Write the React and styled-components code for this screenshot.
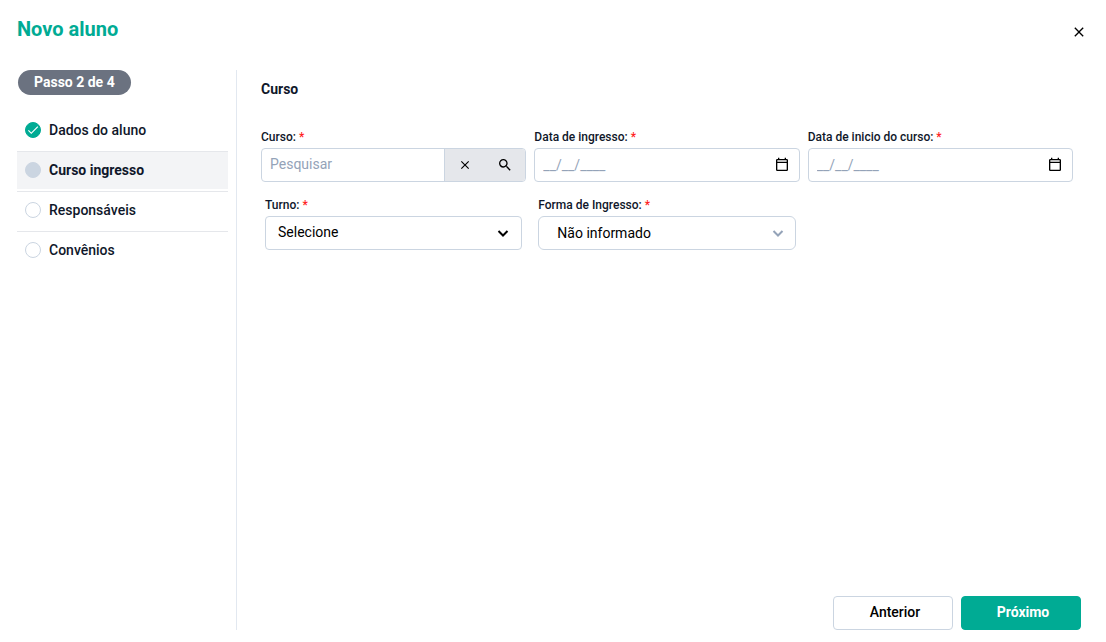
import React, { useState } from 'react';
import styled, { createGlobalStyle } from 'styled-components';

const GlobalStyle = createGlobalStyle`
  *, *::before, *::after {
    box-sizing: border-box;
  }

  body {
    margin: 0;
    background: #fff;
    color: #0f172a;
    font-family: Roboto, 'Liberation Sans', sans-serif;
    font-size: 14px;
    line-height: 20px;
  }

  button, input, select {
    font: inherit;
    color: inherit;
  }
`;

const Dialog = styled.main`
  display: flex;
  flex-direction: column;
  min-height: 100vh;
  padding: 16px 24px 12px 16px;
`;

const Header = styled.header`
  display: flex;
  align-items: flex-start;
  justify-content: space-between;
  height: 54px;
`;

const Title = styled.h1`
  margin: 0 0 0 1px;
  color: #00ab94;
  font-size: 20px;
  font-weight: 700;
  line-height: 26px;
`;

const IconButton = styled.button`
  display: flex;
  align-items: center;
  justify-content: center;
  flex: none;
  width: ${(props) => props.$width || 40}px;
  height: 32px;
  padding: 0;
  border: 0;
  background: transparent;
  color: #000;
  cursor: pointer;
`;

const CloseButton = styled(IconButton)`
  width: 22px;
  margin-right: -8px;
`;

const Content = styled.div`
  display: flex;
  flex: 1;
`;

const Sidebar = styled.aside`
  flex: none;
  width: 221px;
  padding: 0 8px 0 1px;
  border-right: 1px solid #e2e8f0;
`;

const Badge = styled.div`
  width: max-content;
  margin: 0 0 16px 1px;
  padding: 0 16px;
  border-radius: 16px;
  background: #6b7280;
  color: #fff;
  font-weight: 700;
  line-height: 25px;
`;

const Steps = styled.ol`
  margin: 0;
  padding: 0;
  list-style: none;
`;

const Step = styled.li`
  height: 40px;
  padding-bottom: 2px;
  border-top: 1px solid #e5e7eb;

  &:first-child {
    border-top-color: transparent;
  }
`;

const StepLabel = styled.div`
  display: flex;
  align-items: center;
  gap: 8px;
  height: 100%;
  padding: 0 8px 1px;
  background: ${(props) => (props.$active ? '#f3f4f6' : 'transparent')};
  font-weight: ${(props) => (props.$active ? 700 : 500)};
`;

const Dot = styled.span`
  display: flex;
  align-items: center;
  justify-content: center;
  width: 16px;
  height: 16px;
  border: 1px solid ${(props) => (props.$status === 'done' ? '#00ab94' : '#cbd5e1')};
  border-radius: 50%;
  background: ${(props) =>
    ({ done: '#00ab94', active: '#cbd5e1', pending: '#fff' })[props.$status]};
  color: #fff;
`;

const Panel = styled.form`
  display: flex;
  flex: 1;
  flex-direction: column;
  justify-content: space-between;
  min-width: 0;
`;

const Section = styled.section`
  padding: 9px 9px 0 24px;
`;

const SectionTitle = styled.h2`
  margin: 0 0 29px;
  font-size: 14px;
  font-weight: 700;
  line-height: 20px;
`;

const Grid = styled.div`
  display: grid;
  grid-template-columns: repeat(3, minmax(0, 1fr));
  gap: 14px 8px;
`;

const Field = styled.div`
  padding: 0 ${(props) => (props.$inset ? 4 : 0)}px;
`;

const Label = styled.label`
  display: block;
  margin-bottom: 2px;
  font-size: 12px;
  font-weight: 500;
  line-height: 18px;
`;

const Required = styled.span`
  color: #f22;
`;

const Control = styled.div`
  display: flex;
  align-items: center;
  height: 34px;
  border: 1px solid #cbd5e1;
  border-radius: 4px;
  background: #fff;
  overflow: hidden;
`;

const Input = styled.input`
  flex: 1;
  min-width: 0;
  height: 32px;
  padding: 0 8px ${(props) => (props.$raised ? 2 : 0)}px;
  border: 0;
  outline: none;
  background: transparent;

  &::placeholder {
    color: #94a3b8;
    opacity: 1;
  }
`;

const Actions = styled.div`
  display: flex;
  align-self: stretch;
  border-left: 1px solid #cbd5e1;
  background: #e5e7eb;
`;

const SelectBox = styled.div`
  display: grid;
  align-items: center;

  & > * {
    grid-area: 1 / 1;
  }

  & > svg {
    justify-self: end;
    margin-right: ${(props) => (props.$soft ? 10 : 11)}px;
    color: ${(props) => (props.$soft ? '#94a3b8' : '#000')};
    pointer-events: none;
  }
`;

const Select = styled.select`
  appearance: none;
  width: 100%;
  height: 34px;
  padding: ${(props) => (props.$soft ? '0 32px 0 18px' : '0 32px 2px 12px')};
  border: 1px solid #cbd5e1;
  border-radius: ${(props) => (props.$soft ? 6 : 4)}px;
  background: #fff;
  color: #000;
`;

const Footer = styled.footer`
  display: flex;
  justify-content: flex-end;
  gap: 8px;
  padding-right: 1px;
`;

const Button = styled.button`
  width: 120px;
  height: 34px;
  padding: 0 0 2px 4px;
  border: 1px solid ${(props) => (props.$primary ? '#00ab94' : '#cbd5e1')};
  border-radius: 4px;
  background: ${(props) => (props.$primary ? '#00ab94' : '#fff')};
  color: ${(props) => (props.$primary ? '#fff' : '#000')};
  font-weight: ${(props) => (props.$primary ? 700 : 500)};
  cursor: pointer;
`;

const ICONS = {
  close:
    'M19 6.41 17.59 5 12 10.59 6.41 5 5 6.41 10.59 12 5 17.59 6.41 19 12 13.41 17.59 19 19 17.59 13.41 12z',
  search:
    'M15.5 14h-.79l-.28-.27A6.471 6.471 0 0 0 16 9.5 6.5 6.5 0 1 0 9.5 16c1.61 0 3.09-.59 4.23-1.57l.27.28v.79l5 4.99L20.49 19l-4.99-5zm-6 0C7.01 14 5 11.99 5 9.5S7.01 5 9.5 5 14 7.01 14 9.5 11.99 14 9.5 14z',
  calendar:
    'M19 3h-1V1h-2v2H8V1H6v2H5a2 2 0 0 0-2 2v14a2 2 0 0 0 2 2h14a2 2 0 0 0 2-2V5a2 2 0 0 0-2-2m0 16H5V9h14v10m0-12H5V5h14v2z',
  check: 'M9 16.17 4.83 12l-1.42 1.41L9 19 21 7l-1.41-1.41z',
};

const STEPS = [
  { name: 'Dados do aluno', status: 'done' },
  { name: 'Curso ingresso', status: 'active' },
  { name: 'Responsáveis', status: 'pending' },
  { name: 'Convênios', status: 'pending' },
];

function Icon({ name, size = 16 }) {
  return (
    <svg width={size} height={size} viewBox="0 0 24 24" fill="currentColor" aria-hidden="true">
      <path d={ICONS[name]} />
    </svg>
  );
}

function Chevron() {
  return (
    <svg width="16" height="16" viewBox="0 0 16 16" fill="none" aria-hidden="true">
      <path d="M3.5 6 8 10.5 12.5 6" stroke="currentColor" strokeWidth="2" />
    </svg>
  );
}

function FieldLabel({ htmlFor, children }) {
  return (
    <Label htmlFor={htmlFor}>
      {children} <Required>*</Required>
    </Label>
  );
}

function DateField({ id, label }) {
  return (
    <Field>
      <FieldLabel htmlFor={id}>{label}</FieldLabel>
      <Control>
        <Input id={id} type="text" placeholder="__/__/____" />
        <IconButton type="button" $width={34} aria-label="Abrir calendário">
          <Icon name="calendar" />
        </IconButton>
      </Control>
    </Field>
  );
}

function SelectField({ id, label, options, soft }) {
  return (
    <Field $inset>
      <FieldLabel htmlFor={id}>{label}</FieldLabel>
      <SelectBox $soft={soft}>
        <Select id={id} $soft={soft}>
          {options.map((option) => (
            <option key={option}>{option}</option>
          ))}
        </Select>
        <Chevron />
      </SelectBox>
    </Field>
  );
}

export default function App() {
  const [course, setCourse] = useState('');

  return (
    <>
      <GlobalStyle />
      <Dialog>
        <Header>
          <Title>Novo aluno</Title>
          <CloseButton type="button" aria-label="Fechar">
            <Icon name="close" />
          </CloseButton>
        </Header>
        <Content>
          <Sidebar>
            <Badge>Passo 2 de 4</Badge>
            <Steps>
              {STEPS.map((step) => (
                <Step key={step.name}>
                  <StepLabel $active={step.status === 'active'}>
                    <Dot $status={step.status}>
                      {step.status === 'done' && <Icon name="check" size={14} />}
                    </Dot>
                    {step.name}
                  </StepLabel>
                </Step>
              ))}
            </Steps>
          </Sidebar>
          <Panel onSubmit={(evt) => evt.preventDefault()}>
            <Section>
              <SectionTitle>Curso</SectionTitle>
              <Grid>
                <Field>
                  <FieldLabel htmlFor="curso">Curso:</FieldLabel>
                  <Control>
                    <Input
                      id="curso"
                      type="text"
                      placeholder="Pesquisar"
                      $raised
                      value={course}
                      onChange={(evt) => setCourse(evt.target.value)}
                    />
                    <Actions>
                      <IconButton type="button" aria-label="Limpar" onClick={() => setCourse('')}>
                        <Icon name="close" size={14} />
                      </IconButton>
                      <IconButton type="button" aria-label="Buscar">
                        <Icon name="search" />
                      </IconButton>
                    </Actions>
                  </Control>
                </Field>
                <DateField id="ingresso" label="Data de ingresso:" />
                <DateField id="inicio" label="Data de inicio do curso:" />
                <SelectField id="turno" label="Turno:" options={['Selecione']} />
                <SelectField id="forma" label="Forma de Ingresso:" options={['Não informado']} soft />
              </Grid>
            </Section>
            <Footer>
              <Button type="button">Anterior</Button>
              <Button type="submit" $primary>
                Próximo
              </Button>
            </Footer>
          </Panel>
        </Content>
      </Dialog>
    </>
  );
}
